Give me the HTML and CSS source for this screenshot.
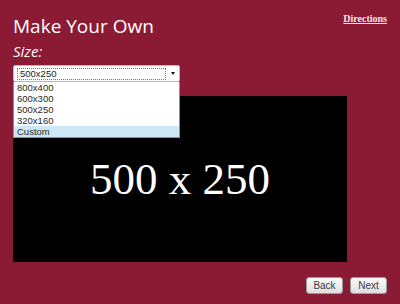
FILE: index.html
```html
<!DOCTYPE html>
<html lang="en">
<head>
    <meta charset="UTF-8">
    <meta name="viewport" content="width=device-width, initial-scale=1.0">
    <title>Make Your Own</title>
    <link rel="stylesheet" href="styles.css">
</head>
<body>
    <div class="page">
        <div class="top">
            <h1>Make Your Own</h1>
            <a href="#" class="directions">Directions</a>
        </div>
        <div class="size-label">Size:</div>

        <div class="picker">
            <div class="select">
                <span class="value">500x250</span>
                <span class="arrow"></span>
            </div>
            <ul class="options">
                <li>800x400</li>
                <li>600x300</li>
                <li>500x250</li>
                <li>320x160</li>
                <li class="active">Custom</li>
            </ul>
        </div>

        <div class="preview">500 x 250</div>

        <div class="actions">
            <button type="button">Back</button>
            <button type="button">Next</button>
        </div>
    </div>
</body>
</html>
```

FILE: styles.css
```css
* {
    margin: 0;
    padding: 0;
    box-sizing: border-box;
}

body {
    background: #8b1a35;
    font-family: 'Open Sans', 'Noto Sans', sans-serif;
    color: #fff;
}

.page {
    padding: 10px 13px 0 13px;
}

.top {
    display: flex;
    justify-content: space-between;
    align-items: flex-start;
}

h1 {
    padding-top: 4px;
    font-size: 19px;
    font-weight: 400;
    line-height: 24px;
}

.directions {
    margin-top: 3px;
    font-family: 'Liberation Serif', serif;
    font-size: 10px;
    font-weight: 700;
    line-height: 12px;
    color: #f3e4e6;
}

.size-label {
    margin-top: 4px;
    font-size: 15px;
    font-style: italic;
    line-height: 18px;
}

.picker {
    position: relative;
    width: 167px;
    margin-top: 5px;
}

.select {
    display: flex;
    align-items: center;
    height: 17px;
    padding: 2px 4px 2px 3px;
    background: #fff;
    border: 1px solid #b9b9b9;
    border-radius: 2px;
}

.value {
    flex: 1;
    height: 12px;
    padding-left: 2px;
    border: 1px dotted #777;
    font-family: 'Liberation Sans', sans-serif;
    font-size: 9.5px;
    line-height: 10px;
    color: #222;
}

.arrow {
    width: 0;
    height: 0;
    margin-left: 5px;
    border-left: 2.5px solid transparent;
    border-right: 2.5px solid transparent;
    border-top: 3px solid #111;
}

.options {
    position: absolute;
    top: 17px;
    left: 0;
    width: 100%;
    list-style: none;
    background: #fff;
    border: 1px solid #8f8f8f;
    border-top: none;
    z-index: 2;
}

.options li {
    height: 11px;
    padding-left: 3px;
    font-family: 'Liberation Sans', sans-serif;
    font-size: 9.5px;
    line-height: 11px;
    color: #2a2a1a;
}

.options li.active {
    background: #cce8f8;
}

.preview {
    display: flex;
    justify-content: center;
    align-items: center;
    width: 334px;
    height: 166px;
    margin-top: 14px;
    background: #000;
    font-family: 'Liberation Serif', serif;
    font-size: 45px;
    color: #fff;
}

.actions {
    display: flex;
    justify-content: flex-end;
    gap: 7px;
    margin-top: 15px;
}

button {
    width: 37px;
    height: 17px;
    background: linear-gradient(#fbfbfb, #dedede);
    border: 1px solid #9a9a9a;
    border-radius: 3px;
    font-family: 'Liberation Sans', sans-serif;
    font-size: 10px;
    line-height: 14px;
    color: #3a3a4a;
    cursor: pointer;
}
```
